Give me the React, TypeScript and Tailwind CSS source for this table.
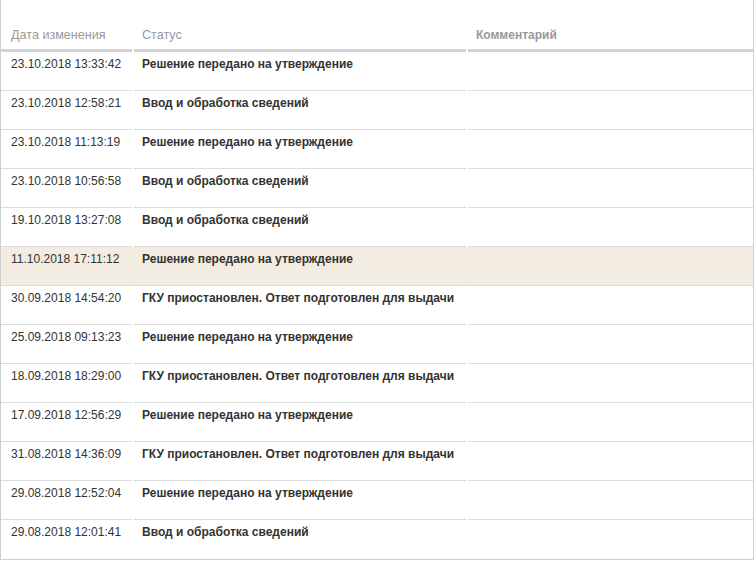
const rows: { date: string; status: string; active?: boolean }[] = [
  { date: '23.10.2018 13:33:42', status: 'Решение передано на утверждение' },
  { date: '23.10.2018 12:58:21', status: 'Ввод и обработка сведений' },
  { date: '23.10.2018 11:13:19', status: 'Решение передано на утверждение' },
  { date: '23.10.2018 10:56:58', status: 'Ввод и обработка сведений' },
  { date: '19.10.2018 13:27:08', status: 'Ввод и обработка сведений' },
  { date: '11.10.2018 17:11:12', status: 'Решение передано на утверждение', active: true },
  { date: '30.09.2018 14:54:20', status: 'ГКУ приостановлен. Ответ подготовлен для выдачи' },
  { date: '25.09.2018 09:13:23', status: 'Решение передано на утверждение' },
  { date: '18.09.2018 18:29:00', status: 'ГКУ приостановлен. Ответ подготовлен для выдачи' },
  { date: '17.09.2018 12:56:29', status: 'Решение передано на утверждение' },
  { date: '31.08.2018 14:36:09', status: 'ГКУ приостановлен. Ответ подготовлен для выдачи' },
  { date: '29.08.2018 12:52:04', status: 'Решение передано на утверждение' },
  { date: '29.08.2018 12:01:41', status: 'Ввод и обработка сведений' },
]

const cols = 'grid grid-cols-[131px_332px_1fr] gap-x-[2px]'

export default function App() {
  return (
    <div className="w-[756px] h-[562px] bg-white font-['Liberation_Sans',Arial,sans-serif] text-[12px] leading-4">
      <div className="w-[754px] border-l border-r border-b border-[#cfcfcf]">
        {/* Header */}
        <div className={cols}>
          <div className="h-[52px] pt-[27px] pl-[10px] border-b-[3px] border-[#d4d4d4] text-[#999] text-[12.6px]">Дата изменения</div>
          <div className="h-[52px] pt-[27px] pl-[8px] border-b-[3px] border-[#d4d4d4] text-[#999] text-[12.6px]">Статус</div>
          <div className="h-[52px] pt-[27px] pl-[8px] border-b-[3px] border-[#d4d4d4] text-[#999] font-bold">Комментарий</div>
        </div>

        {/* Rows */}
        {rows.map((r, i) => (
          <div key={i} className={`${cols} ${r.active ? 'bg-[#f3ece1]' : ''}`}>
            <div className={`h-[39px] pt-[4px] pl-[10px] text-[#333] ${i < rows.length - 1 ? 'border-b border-[#dcdcdc]' : ''}`}>
              {r.date}
            </div>
            <div className={`h-[39px] pt-[4px] pl-[8px] font-bold text-[#333] ${i < rows.length - 1 ? 'border-b border-[#dcdcdc]' : ''}`}>
              {r.status}
            </div>
            <div className={`h-[39px] ${i < rows.length - 1 ? 'border-b border-[#dcdcdc]' : ''}`} />
          </div>
        ))}
      </div>
    </div>
  )
}
